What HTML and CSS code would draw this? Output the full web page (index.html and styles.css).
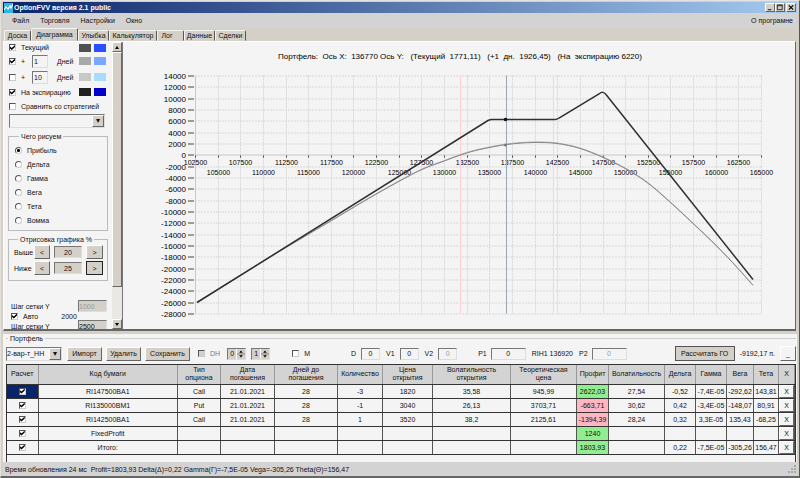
FILE: index.html
```html
<!DOCTYPE html>
<html lang="ru">
<head>
    <meta charset="UTF-8">
    <meta name="viewport" content="width=device-width, initial-scale=1.0">
    <title>OptionFVV</title>
    <link rel="stylesheet" href="styles.css">
</head>
<body>
    <header class="title-bar">
        <svg class="app-icon" viewBox="0 0 9 10">
            <rect width="9" height="10" fill="#2fb4e8"/>
            <path d="M0 7L2 4L4 6L6 3L7 5L9 1" fill="none" stroke="#fff" stroke-width="1.2"/>
        </svg>
        <h1>OptionFVV версия 2.1 public</h1>
        <div class="window-buttons">
            <button type="button" aria-label="Свернуть"><svg viewBox="0 0 9 8"><path d="M2 6.5h4" stroke="#000"/></svg></button>
            <button type="button" aria-label="Развернуть"><svg viewBox="0 0 9 8"><path d="M1.5 1h5.5v5.5h-5.5zM1.5 2h5.5" fill="none" stroke="#222"/></svg></button>
            <button type="button" aria-label="Закрыть"><svg viewBox="0 0 9 8"><path d="M2 1.5l5 5M7 1.5l-5 5" stroke="#000" stroke-width="1.3"/></svg></button>
        </div>
    </header>

    <nav class="menu">
        <a href="#">Файл</a>
        <a href="#">Торговля</a>
        <a href="#">Настройки</a>
        <a href="#">Окно</a>
        <a href="#" class="about">О програмне</a>
    </nav>

    <div class="tabs" role="tablist">
        <button type="button" role="tab">Доска</button>
        <button type="button" role="tab" class="active" aria-selected="true">Диаграмма</button>
        <button type="button" role="tab">Улыбка</button>
        <button type="button" role="tab" class="wide">Калькулятор</button>
        <button type="button" role="tab" class="short">Лог</button>
        <button type="button" role="tab">Данные</button>
        <button type="button" role="tab">Сделки</button>
    </div>

    <main class="workspace">
        <aside class="sidebar">
            <div class="options">
                <div class="row first">
                    <input type="checkbox" id="show-current" checked>
                    <label for="show-current">Текущий</label>
                    <span class="swatches"><i class="c-dark"></i><i class="c-blue"></i></span>
                </div>
                <div class="row tall">
                    <input type="checkbox" id="show-plus1" checked>
                    <label for="show-plus1" class="plus">+</label>
                    <input type="text" id="days1" class="days" value="1">
                    <label for="days1">Дней</label>
                    <span class="swatches"><i class="c-mid"></i><i class="c-sky"></i></span>
                </div>
                <div class="row tall">
                    <input type="checkbox" id="show-plus10">
                    <label for="show-plus10" class="plus">+</label>
                    <input type="text" id="days10" class="days" value="10">
                    <label for="days10">Дней</label>
                    <span class="swatches"><i class="c-light"></i><i class="c-pale"></i></span>
                </div>
                <div class="row">
                    <input type="checkbox" id="show-exp" checked>
                    <label for="show-exp">На экспирацию</label>
                    <span class="swatches"><i class="c-black"></i><i class="c-navy"></i></span>
                </div>
                <div class="row">
                    <input type="checkbox" id="compare">
                    <label for="compare">Сравнить со стратегией</label>
                </div>
                <div class="combo strategy">
                    <select aria-label="Стратегия"><option></option></select>
                </div>

                <fieldset class="group draw-group">
                    <legend>Чего рисуем</legend>
                    <label><input type="radio" name="draw" checked>Прибыль</label>
                    <label><input type="radio" name="draw">Дельта</label>
                    <label><input type="radio" name="draw">Гамма</label>
                    <label><input type="radio" name="draw">Вега</label>
                    <label><input type="radio" name="draw">Тета</label>
                    <label><input type="radio" name="draw">Вомма</label>
                </fieldset>

                <fieldset class="group range-group">
                    <legend>Отрисовка графика %</legend>
                    <div class="range">
                        <label for="above">Выше</label>
                        <button type="button">&lt;</button>
                        <input type="text" id="above" value="20">
                        <button type="button">&gt;</button>
                    </div>
                    <div class="range">
                        <label for="below">Ниже</label>
                        <button type="button">&lt;</button>
                        <input type="text" id="below" value="25">
                        <button type="button" class="focused">&gt;</button>
                    </div>
                </fieldset>

                <div class="step">
                    <label for="step-y">Шаг сетки Y</label>
                    <input type="text" id="step-y" value="1000" disabled>
                </div>
                <div class="step auto">
                    <input type="checkbox" id="auto" checked>
                    <label for="auto">Авто</label>
                    <output>2000</output>
                </div>
                <div class="step">
                    <label for="step-x">Шаг сетки Y</label>
                    <input type="text" id="step-x" value="2500">
                </div>
            </div>
            <div class="scrollbar">
                <button type="button" class="up" aria-label="Вверх"></button>
                <div class="thumb"></div>
                <button type="button" class="down" aria-label="Вниз"></button>
            </div>
        </aside>
        <svg class="chart" id="chart" viewBox="0 0 672 286">
            <text class="chart-title" x="337" y="16">Портфель:&nbsp; Ось X:&nbsp; 136770 Ось Y:&nbsp;&nbsp; (Текущий&nbsp; 1771,11)&nbsp;&nbsp; (+1&nbsp; дн.&nbsp; 1926,45)&nbsp;&nbsp; (На&nbsp; экспирацию 6220)</text>
            <g id="grid"></g>
            <path class="limit" d="M337.5 33V271M430.5 33V271"/>
            <path class="price" d="M383.5 33V271"/>
            <path class="curve plus-one" id="plus-one"/>
            <path class="curve current" id="current"/>
            <path class="curve expiry" d="M74 260L365 78Q367 77 369 77H432Q434 77 436 75.5L476 51.5Q480 48 483 52L630 237"/>
            <circle cx="382.5" cy="77" r="1.8" fill="#111"/>
            <circle cx="382.5" cy="102.5" r="1.5" fill="#777"/>
        </svg>
    </main>

    <section class="portfolio">
        <h2>Портфель</h2>
        <form class="toolbar">
            <div class="combo portfolio-name">
                <select aria-label="Портфель"><option>2-вар-т_НН</option></select>
            </div>
            <div class="actions">
                <button type="button">Импорт</button>
                <button type="button">Удалить</button>
                <button type="button" class="save">Сохранить</button>
            </div>
            <label class="check muted"><input type="checkbox" disabled>DH</label>
            <div class="spinners">
                <span class="spinner"><input type="text" value="0" aria-label="DH от"><svg viewBox="0 0 9 10"><path d="M0 5h9" stroke="#777"/><path d="M4.5 1l2 2.500h-4zM4.500 9l2-2.500h-4z"/></svg></span>
                <span class="spinner"><input type="text" value="1" aria-label="DH до"><svg viewBox="0 0 9 10"><path d="M0 5h9" stroke="#777"/><path d="M4.5 1l2 2.500h-4zM4.500 9l2-2.500h-4z"/></svg></span>
            </div>
            <label class="check"><input type="checkbox">M</label>
            <div class="values">
                <label>D<input type="text" value="0"></label>
                <label>V1<input type="text" value="0"></label>
                <label>V2<input type="text" value="0" disabled></label>
            </div>
            <div class="prices">
                <label>P1<input type="text" value="0"></label>
                <span>RIH1 136920</span>
                <label>P2<input type="text" value="0" disabled></label>
            </div>
            <div class="margin">
                <button type="button" class="default">Рассчитать ГО</button>
                <span>-9192,17 п.</span>
                <button type="button" class="collapse">_</button>
            </div>
        </form>

        <div class="table-box">
            <table>
                <colgroup>
                    <col class="w-calc"><col><col class="w-type"><col class="w-date"><col class="w-days"><col class="w-qty"><col class="w-price"><col class="w-vol"><col class="w-theor"><col class="w-profit"><col class="w-iv"><col class="w-greek"><col class="w-greek"><col class="w-vega"><col class="w-theta"><col class="w-del">
                </colgroup>
                <thead>
                    <tr>
                        <th>Расчет</th><th>Код бумаги</th><th>Тип<br>опциона</th><th>Дата<br>погашения</th><th>Дней до<br>погашения</th><th>Количество</th><th>Цена<br>открытия</th><th>Волатильность<br>открытия</th><th>Теоретическая<br>цена</th><th>Профит</th><th>Волатильность</th><th>Дельта</th><th>Гамма</th><th>Вега</th><th>Тета</th><th>X</th>
                    </tr>
                </thead>
                <tbody>
                    <tr>
                        <td class="selected"><input type="checkbox" aria-label="Расчет" checked></td><td>RI147500BA1</td><td>Call</td><td>21.01.2021</td><td>28</td><td>-3</td><td>1820</td><td>35,58</td><td>945,99</td><td class="gain">2622,03</td><td>27,54</td><td>-0,52</td><td>-7,4E-05</td><td>-292,62</td><td>143,81</td><td class="del"><button type="button">X</button></td>
                    </tr>
                    <tr>
                        <td><input type="checkbox" aria-label="Расчет" checked></td><td>RI135000BM1</td><td>Put</td><td>21.01.2021</td><td>28</td><td>-1</td><td>3040</td><td>26,13</td><td>3703,71</td><td class="loss">-663,71</td><td>30,62</td><td>0,42</td><td>-3,4E-05</td><td>-148,07</td><td>80,91</td><td class="del"><button type="button">X</button></td>
                    </tr>
                    <tr>
                        <td><input type="checkbox" aria-label="Расчет" checked></td><td>RI142500BA1</td><td>Call</td><td>21.01.2021</td><td>28</td><td>1</td><td>3520</td><td>38,2</td><td>2125,61</td><td class="loss">-1394,39</td><td>28,24</td><td>0,32</td><td>3,3E-05</td><td>135,43</td><td>-68,25</td><td class="del"><button type="button">X</button></td>
                    </tr>
                    <tr>
                        <td><input type="checkbox" aria-label="Расчет" checked></td><td>FixedProfit</td><td></td><td></td><td></td><td></td><td></td><td></td><td></td><td class="gain">1240</td><td></td><td></td><td></td><td></td><td></td><td class="del"><button type="button">X</button></td>
                    </tr>
                    <tr>
                        <td><input type="checkbox" aria-label="Расчет" checked></td><td>Итого:</td><td></td><td></td><td></td><td></td><td></td><td></td><td></td><td class="gain">1803,93</td><td></td><td>0,22</td><td>-7,5E-05</td><td>-305,26</td><td>156,47</td><td class="del"><button type="button">X</button></td>
                    </tr>
                </tbody>
            </table>
        </div>
    </section>

    <footer class="status">
        <span>Время обновления 24 мс&nbsp; Profit=1803,93 Delta(Δ)=0,22 Gamma(Γ)=-7,5E-05 Vega=-305,26 Theta(Θ)=156,47</span>
        <svg class="grip" viewBox="0 0 8 8"><path d="M6 0h2v2h-2zM3 3h2v2h-2zM6 3h2v2h-2zM0 6h2v2h-2zM3 6h2v2h-2zM6 6h2v2h-2z" fill="#aaa"/></svg>
    </footer>

    <script>
        const grid = document.getElementById("grid");
        const LEFT = 72, RIGHT = 638, TOP = 33, BOTTOM = 271, ZERO = 112;

        function add(tag, attrs, text) {
            const el = document.createElementNS("http://www.w3.org/2000/svg", tag);
            for (const key in attrs) el.setAttribute(key, attrs[key]);
            if (text !== undefined) el.textContent = text;
            grid.appendChild(el);
        }

        // Horizontal lines and price labels
        for (let value = 14000; value >= -28000; value -= 2000) {
            const y = Math.round(TOP + (14000 - value) / 42000 * (BOTTOM - TOP)) + 0.5;
            add("path", { class: value === 0 ? "axis" : "grid-line", d: `M${LEFT} ${y}H${RIGHT}` });
            add("path", { class: "tick", d: `M65 ${y}h6` });
            add("text", { class: "y-label", x: 63, y: y + 3 }, value);
        }

        // Vertical lines, labels go in two rows
        for (let i = 0; i <= 25; i++) {
            const x = Math.round(LEFT + i / 25 * (RIGHT - LEFT)) + 0.5;
            add("path", { class: i === 0 ? "axis" : "grid-line", d: `M${x} ${TOP}V${BOTTOM}` });
            add("path", { class: "tick", d: `M${x} ${ZERO + 1}v2` });
            add("text", { class: "x-label", x: x, y: i % 2 ? 132 : 122 }, 102500 + i * 2500);
        }

        const points = [
            [74, 260], [150, 213], [180, 195], [207, 179], [244, 157], [274, 140], [299, 127], [320, 119],
            [339, 112], [357, 107], [384, 102], [410, 100], [434, 101], [457, 106], [480, 115],
            [504, 127], [524, 140], [543, 156], [570, 181], [594, 204], [614, 225], [630, 243]
        ];

        // Smooth line through all points
        function smooth(p) {
            let d = `M${p[0]}`;
            for (let i = 0; i < p.length - 1; i++) {
                const a = p[i - 1] || p[i], b = p[i], c = p[i + 1], e = p[i + 2] || c;
                d += `C${b[0] + (c[0] - a[0]) / 6} ${b[1] + (c[1] - a[1]) / 6} ${c[0] - (e[0] - b[0]) / 6} ${c[1] - (e[1] - b[1]) / 6} ${c}`;
            }
            return d;
        }

        document.getElementById("current").setAttribute("d", smooth(points));
        document.getElementById("plus-one").setAttribute("d", smooth(points.map(p => [p[0], p[1] - 0.5])));
    </script>
</body>
</html>
```

FILE: styles.css
```css
* {
    box-sizing: border-box;
}
body {
    font-family: "Liberation Sans", Arial, sans-serif;
    font-size: 7px;
    line-height: 9px;
    color: #111;
    display: flex;
    flex-direction: column;
    height: 100vh;
    margin: 0;
    padding: 1px 2px 0;
    background-color: #d4d0c8;
    border: 1px solid #e4e2dc;
    border-right: 1px solid #555;
    border-bottom: 2px solid #666;
    overflow: hidden;
}
h1, h2 {
    margin: 0;
    font-size: 7px;
}
input, button, select {
    font: inherit;
    color: inherit;
    margin: 0;
    padding: 0;
    border-radius: 0;
}
button {
    background-color: #d4d0c8;
    border: 1px solid;
    border-color: #fff #666 #666 #fff;
    white-space: nowrap;
}
input[type="text"] {
    min-width: 0;
    background-color: #f4f4f4;
    border: 1px solid;
    border-color: #777 #ddd #ddd #777;
    text-align: center;
}
input:disabled {
    color: #999;
}
input[type="checkbox"], input[type="radio"] {
    appearance: none;
    flex: none;
    display: block;
    width: 7px;
    height: 7px;
    background-color: #fff;
    border: 1px solid;
    border-color: #555 #ccc #ccc #555;
}
input[type="checkbox"]:checked::before {
    content: "";
    display: block;
    height: 5px;
    background-color: #000;
    clip-path: polygon(0 30%, 35% 60%, 100% 0, 100% 40%, 35% 100%, 0 70%);
}
input[type="radio"] {
    border-radius: 50%;
}
input[type="radio"]:checked {
    background: radial-gradient(circle, #000 0 35%, #fff 50%);
}

/* Title bar */
.title-bar {
    display: flex;
    align-items: center;
    flex: none;
    height: 11px;
    padding: 0 1px;
    background: linear-gradient(to right, #0a246a, #a6caf0);
    color: #fff;
}
.app-icon {
    width: 9px;
    height: 10px;
    margin-right: 1px;
}
.window-buttons {
    display: flex;
    margin-left: auto;
}
.window-buttons button {
    width: 10px;
    height: 9px;
}
.window-buttons button:last-child {
    margin-left: 1px;
}
.window-buttons svg {
    display: block;
    width: 8px;
    height: 7px;
}

/* Menu and tabs */
.menu {
    display: flex;
    align-items: center;
    flex: none;
    gap: 11px;
    height: 15px;
    padding: 0 4px 0 9px;
    background-color: #d3d3d3;
}
.menu a {
    color: inherit;
    text-decoration: none;
}
.about {
    margin-left: auto;
}
.tabs {
    display: flex;
    align-items: flex-end;
    flex: none;
    height: 13px;
    padding-left: 1px;
}
.tabs button {
    width: 31px;
    height: 11px;
    border-color: #f4f4f4 #555 #d4d0c8 #f4f4f4;
    border-radius: 2px 2px 0 0;
}
.tabs button:first-child {
    width: 27px;
}
.tabs .active {
    width: 47px;
    height: 13px;
}
.tabs .wide {
    width: 48px;
}
.tabs .short {
    width: 27px;
    padding-right: 7px;
}

/* Chart pane */
.workspace {
    display: flex;
    flex: 1;
    min-height: 0;
    margin-right: 1px;
    background-color: #f4f4f4;
    border: 1px solid;
    border-color: #fff #666 #666 #fff;
    border-bottom-width: 2px;
}
.sidebar {
    display: flex;
    flex: none;
    width: 119px;
    border-right: 1px solid #777;
    overflow: hidden;
}
.options {
    flex: 1;
    padding: 0 4px;
}
.row {
    display: flex;
    align-items: center;
    gap: 5px;
    height: 14px;
    padding: 0 2px 0 1px;
    white-space: nowrap;
}
.row.first {
    height: 11px;
}
.row.tall {
    height: 16px;
}
.plus {
    width: 6px;
}
input.days {
    width: 16px;
    height: 13px;
    margin-right: 4px;
    padding-left: 1px;
    text-align: left;
}
.swatches {
    display: flex;
    gap: 3px;
    margin-left: auto;
}
.swatches i {
    width: 12px;
    height: 8px;
}
.c-dark { background-color: #505050; }
.c-blue { background-color: #2850ff; }
.c-mid { background-color: #a8a8a8; }
.c-sky { background-color: #78a8ff; }
.c-light { background-color: #c8c8c8; }
.c-pale { background-color: #a8dcff; }
.c-black { background-color: #202020; }
.c-navy { background-color: #0000c8; }
.combo {
    position: relative;
    height: 14px;
    border: 1px solid;
    border-color: #777 #ddd #ddd #777;
}
.combo select {
    appearance: none;
    display: block;
    width: 100%;
    height: 100%;
    border: none;
    background-color: transparent;
}
.combo::after {
    content: "▾";
    position: absolute;
    top: 0;
    right: 0;
    bottom: 0;
    width: 10px;
    border: 1px solid;
    border-color: #fff #666 #666 #fff;
    background-color: #d4d0c8;
    font-size: 8px;
    text-align: center;
    pointer-events: none;
}
.strategy {
    margin: 1px 3px 0 1px;
}
.group {
    min-width: 0;
    margin: 4px 0 0;
    border: 1px solid #bbb;
}
.group legend {
    margin-left: 4px;
    padding: 0 2px;
}
.draw-group {
    padding: 2px 6px 3px;
}
.draw-group label {
    display: flex;
    align-items: center;
    gap: 5px;
    height: 14px;
}
.range-group {
    padding: 0 3px 4px 5px;
}
.range {
    display: grid;
    grid-template-columns: 16px 16px 28px 17px;
    gap: 4px;
    align-items: center;
    height: 16px;
}
.range button {
    height: 14px;
}
.range input[type="text"] {
    height: 12px;
    background-color: #d4d0c8;
}
.range .focused {
    border-color: #222;
}
.step {
    display: flex;
    align-items: center;
    justify-content: space-between;
    height: 10px;
    padding: 0 1px 0 3px;
}
.range-group + .step {
    margin-top: 20px;
}
.step input[type="text"] {
    width: 29px;
    height: 12px;
    background-color: #d4d0c8;
    text-align: left;
}
.auto {
    justify-content: flex-start;
    gap: 5px;
}
.auto output {
    margin-left: 18px;
}
.scrollbar {
    display: flex;
    flex-direction: column;
    width: 10px;
    background-color: #eae8e4;
}
.scrollbar button {
    height: 10px;
    display: grid;
    place-items: center;
}
.scrollbar button::before {
    content: "";
    border: 2px solid transparent;
}
.scrollbar .up::before {
    border-top: 0;
    border-bottom: 3px solid #000;
}
.scrollbar .down::before {
    border-bottom: 0;
    border-top: 3px solid #000;
}
.thumb {
    flex: 1;
    margin-bottom: 32px;
    background-color: #d4d0c8;
    border: 1px solid;
    border-color: #fff #666 #666 #fff;
}
.chart {
    flex: 1;
    min-width: 0;
    width: 100%;
    height: 100%;
}
.chart-title {
    font-size: 8px;
    text-anchor: middle;
}
.y-label {
    font-size: 8px;
    text-anchor: end;
}
.x-label {
    font-size: 7px;
    text-anchor: middle;
}
.grid-line {
    stroke: #d8d8d8;
    stroke-dasharray: 2 1;
}
.axis {
    stroke: #c8c8c8;
}
.tick {
    stroke: #444;
}
.limit {
    stroke: #ffd0d4;
}
.price {
    stroke: #9aa8b4;
}
.curve {
    fill: none;
}
.current {
    stroke: #888;
}
.plus-one {
    stroke: #b0b0b0;
}
.expiry {
    stroke: #303030;
    stroke-width: 1.5;
}

/* Portfolio */
.portfolio {
    flex: none;
    margin: 3px 0 0;
    padding: 0 1px 0 3px;
    background-color: #f4f4f4;
}
.portfolio h2 {
    display: flex;
    align-items: center;
    gap: 2px;
    font-weight: normal;
}
.portfolio h2::before, .portfolio h2::after {
    content: "";
    width: 2px;
    height: 1px;
    background-color: #ccc;
}
.portfolio h2::after {
    flex: 1;
}
.toolbar {
    display: flex;
    align-items: center;
    height: 21px;
    white-space: nowrap;
}
.toolbar button {
    height: 14px;
    width: 35px;
}
.portfolio-name {
    width: 56px;
}
.actions {
    display: flex;
    gap: 4px;
    margin: 0 8px 0 5px;
}
.toolbar .save {
    width: 45px;
}
.check {
    display: flex;
    align-items: center;
    gap: 5px;
}
.muted {
    color: #777;
}
.muted input[type="checkbox"] {
    background-color: #d4d0c8;
}
.spinners {
    display: flex;
    gap: 5px;
    margin: 0 22px 0 7px;
}
.spinner {
    display: flex;
    width: 19px;
    height: 12px;
    border: 1px solid;
    border-color: #777 #ddd #ddd #777;
}
.spinner input[type="text"] {
    width: 8px;
    border: none;
    background-color: #d4d0c8;
}
.spinner svg {
    width: 9px;
    height: 10px;
    background-color: #d4d0c8;
    border-left: 1px solid #fff;
}
.values, .prices {
    display: flex;
    align-items: center;
    gap: 6px;
}
.values label, .prices label {
    display: flex;
    align-items: center;
    gap: 5px;
}
.values {
    margin: 0 21px 0 41px;
}
.values input {
    width: 19px;
    height: 12px;
}
.prices input {
    width: 35px;
    height: 12px;
}
.prices label {
    gap: 4px;
}
.margin {
    display: flex;
    align-items: center;
    gap: 5px;
    margin-left: auto;
}
.toolbar .default {
    width: 60px;
    height: 15px;
    border-color: #555;
}
.toolbar .collapse {
    width: 16px;
    height: 15px;
    background-color: #f4f4f4;
}
.table-box {
    height: 98px;
    border: 1px solid #333;
    border-bottom: none;
}
table {
    width: 100%;
    table-layout: fixed;
    border-collapse: collapse;
}
th, td {
    height: 14px;
    padding: 0;
    border-right: 1px solid #555;
    border-bottom: 1px solid #333;
    font-weight: normal;
    text-align: center;
    white-space: nowrap;
}
th {
    height: 19px;
    line-height: 8px;
    background-color: #d3d3d3;
    border-right-color: #999;
}
td input[type="checkbox"] {
    margin: 0 auto;
}
.w-calc { width: 31px; }
.w-type { width: 43px; }
.w-date { width: 54px; }
.w-days { width: 63px; }
.w-qty { width: 45px; }
.w-price { width: 50px; }
.w-vol { width: 78px; }
.w-theor { width: 66px; }
.w-profit { width: 32px; }
.w-iv { width: 56px; }
.w-greek { width: 31px; }
.w-vega { width: 27px; }
.w-theta { width: 25px; }
.w-del { width: 16px; }
.selected {
    background-color: #0a246a;
}
.gain {
    background-color: #90ee90;
}
.loss {
    background-color: #ffb6c1;
}
.del button {
    display: block;
    width: 100%;
    height: 13px;
    background-color: #f4f4f4;
}

/* Status bar */
.status {
    display: flex;
    align-items: center;
    justify-content: space-between;
    flex: none;
    height: 14px;
    padding: 0 1px 0 2px;
    background-color: #d3d3d3;
}
.grip {
    width: 8px;
    height: 8px;
}
```
